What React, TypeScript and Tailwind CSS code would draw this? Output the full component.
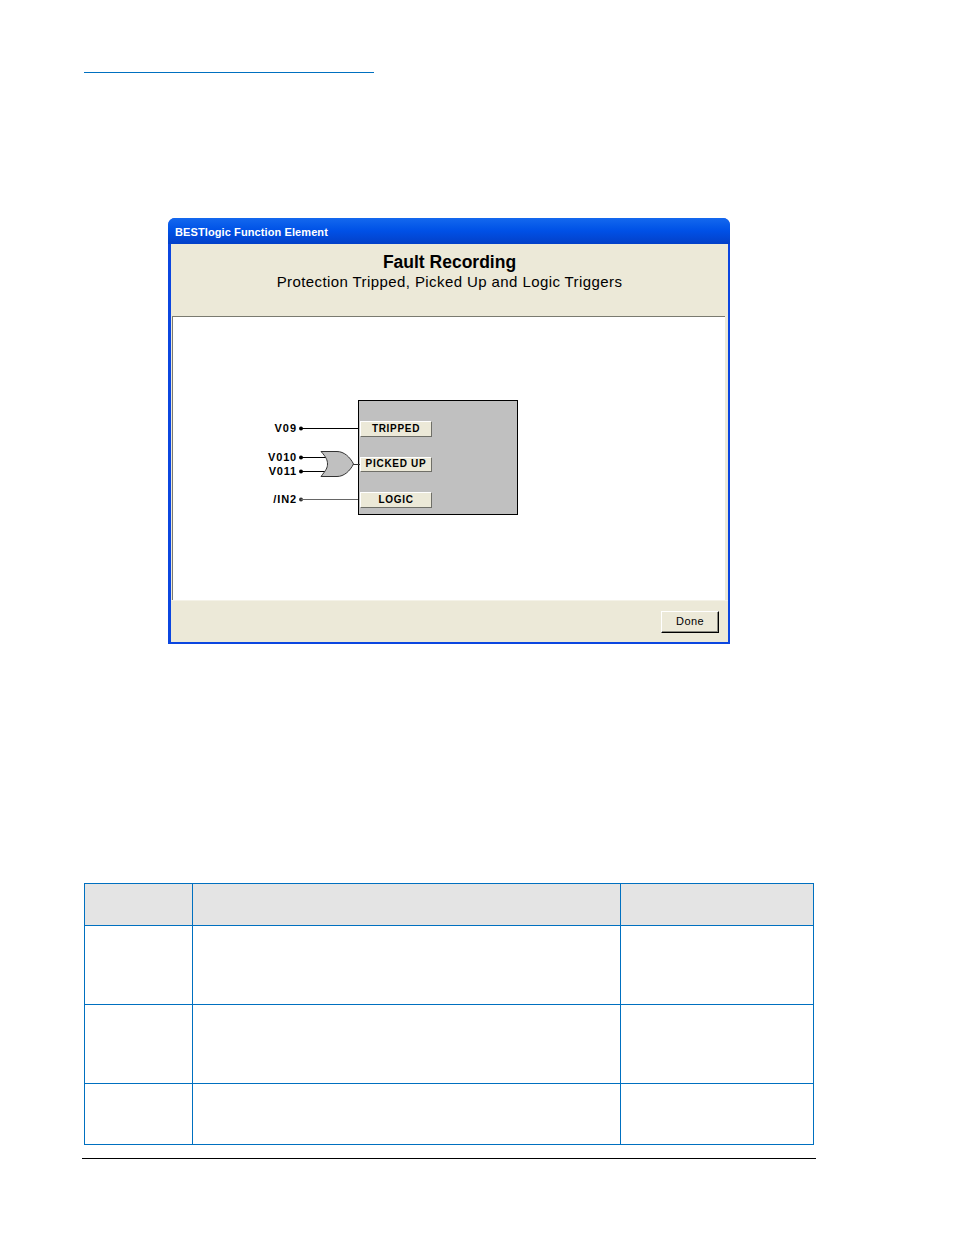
const FONT = "font-['Liberation_Sans',Arial,sans-serif]";

const DiagramButton: React.FC<{ label: string; className: string }> = ({ label, className }) => {
  return (
    <div
      className={`flex w-[72px] items-center justify-center border border-t-white border-l-white border-r-[#6f6f68] border-b-[#6f6f68] bg-[#ece9d8] pb-[2px] text-[10px] font-bold tracking-[0.7px] text-black ${className}`}
    >
      {label}
    </div>
  );
};

const Wires: React.FC = () => {
  return (
    <svg className="absolute left-0 top-0" width="260" height="124" viewBox="262 396 260 124" fill="none">
      <circle cx="301" cy="428.5" r="2" fill="#000" />
      <circle cx="301" cy="457.5" r="2" fill="#000" />
      <circle cx="301" cy="471.5" r="2" fill="#000" />
      <circle cx="301" cy="499.5" r="2" fill="#333" />
      <path d="M301 428.5H358" stroke="#000" />
      <path d="M301 457.5H327M301 471.5H327" stroke="#000" />
      <path d="M301 499.5H358" stroke="#666" />
      <path d="M353 464.5H360" stroke="#333" />
      <path
        d="M321 451.5H337C344 451.5 350 457 353.5 464C350 471 344 476.5 337 476.5H321C326 470 327.5 468 327.5 464C327.5 460 326 457 321 451.5Z"
        fill="#c0c0c0"
        stroke="#333"
      />
    </svg>
  );
};

const Diagram: React.FC = () => {
  return (
    <div className="absolute left-[89px] top-[79px] h-[124px] w-[260px]">
      <div className="absolute left-[96px] top-[4px] flex h-[115px] w-[160px] flex-col items-start border border-black bg-[#c0c0c0] pl-[1px] pt-[20px]">
        <DiagramButton label="TRIPPED" className="h-[16px]" />
        <DiagramButton label="PICKED UP" className="mt-[20px] h-[15px]" />
        <DiagramButton label="LOGIC" className="mt-[20px] h-[16px]" />
      </div>
      <Wires />
      <span className="absolute left-0 top-[26px] w-[35px] text-right text-[11px] font-bold leading-[13px] tracking-[1px]">V09</span>
      <span className="absolute left-0 top-[55px] w-[35px] text-right text-[11px] font-bold leading-[13px] tracking-[0.8px]">V010</span>
      <span className="absolute left-0 top-[69px] w-[35px] text-right text-[11px] font-bold leading-[13px] tracking-[0.8px]">V011</span>
      <span className="absolute left-0 top-[97px] w-[35px] text-right text-[11px] font-bold leading-[13px] tracking-[0.9px]">/IN2</span>
    </div>
  );
};

const LogicWindow: React.FC = () => {
  return (
    <div className="ml-[168px] mt-[145px] flex h-[426px] w-[562px] flex-col rounded-t-[7px] bg-[#0b46e0] pb-[2px] pl-[3px] pr-[2px]">
      <div className="-ml-[3px] -mr-[2px] flex h-[26px] shrink-0 items-center rounded-t-[7px] bg-gradient-to-b from-[#1468ee] via-[#0050e6] to-[#0340c8] pl-[7px] pt-[3px]">
        <span className="text-[11px] font-bold tracking-[0.1px] text-white">BESTlogic Function Element</span>
      </div>
      <div className="flex h-[72px] shrink-0 flex-col items-center bg-[#ece9d8] pt-[8px]">
        <h2 className="text-[17.5px] font-bold leading-[20px] text-black">Fault Recording</h2>
        <p className="mt-[1px] text-[15px] leading-[18px] tracking-[0.41px] text-black">Protection Tripped, Picked Up and Logic Triggers</p>
      </div>
      <div className="flex min-h-0 flex-1 flex-col bg-[#ece9d8]">
        <div className="relative ml-[1px] mr-[3px] h-[284px] shrink-0 border-l border-t border-l-[#7a7a70] border-t-[#7a7a70] bg-white">
          <Diagram />
        </div>
        <div className="flex flex-1 items-start justify-end border-t border-t-[#f4f2e8] pr-[9px] pt-[10px]">
          <button className="flex h-[22px] w-[58px] items-center justify-center border border-t-white border-l-white border-r-black border-b-black bg-[#ece9d8] pb-[2px] text-[11px] tracking-[0.4px] text-black shadow-[inset_-1px_-1px_0_#8a8a80]">
            Done
          </button>
        </div>
      </div>
    </div>
  );
};

const rows = ["h-[42px] bg-[#e4e4e4]", "h-[79px]", "h-[79px]", "h-[61px]"];

const BlankTable: React.FC = () => {
  return (
    <table className="ml-[84px] mt-[239px] w-[730px] table-fixed border-collapse border border-[#0070c0]">
      <colgroup>
        <col className="w-[108px]" />
        <col className="w-[428px]" />
        <col />
      </colgroup>
      <tbody>
        {rows.map((row, i) => (
          <tr key={i} className={row}>
            <td className="border border-[#0070c0]"></td>
            <td className="border border-[#0070c0]"></td>
            <td className="border border-[#0070c0]"></td>
          </tr>
        ))}
      </tbody>
    </table>
  );
};

export default function App() {
  return (
    <div className={`h-[1235px] w-[954px] overflow-hidden bg-white pt-[72px] ${FONT}`}>
      <div className="ml-[84px] h-px w-[290px] bg-[#0070c0]"></div>
      <LogicWindow />
      <BlankTable />
      <div className="ml-[82px] mt-[13px] h-px w-[734px] bg-black"></div>
    </div>
  );
}
